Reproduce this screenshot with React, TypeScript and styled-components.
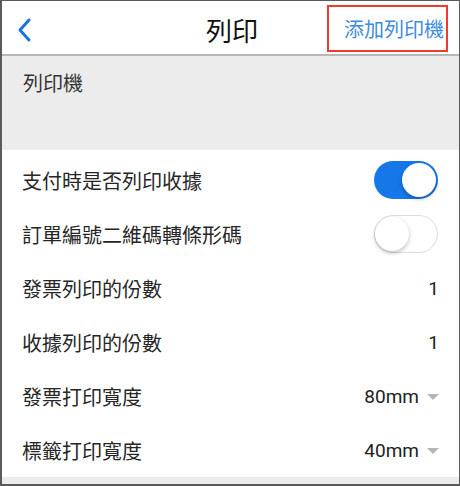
import { useState } from "react"
import styled, { createGlobalStyle } from "styled-components"

const GlobalStyle = createGlobalStyle`
  html, body {
    margin: 0;
    padding: 0;
    background: #ffffff;
  }
  body {
    font-family: Roboto, "Noto Sans CJK TC", "Noto Sans CJK SC", sans-serif;
  }
`

type Row =
  | { kind: "switch"; label: string; on: boolean }
  | { kind: "value"; label: string; value: string }
  | { kind: "select"; label: string; value: string }

const rows: Row[] = [
  { kind: "switch", label: "支付時是否列印收據", on: true },
  { kind: "switch", label: "訂單編號二維碼轉條形碼", on: false },
  { kind: "value", label: "發票列印的份數", value: "1" },
  { kind: "value", label: "收據列印的份數", value: "1" },
  { kind: "select", label: "發票打印寬度", value: "80mm" },
  { kind: "select", label: "標籤打印寬度", value: "40mm" },
]

export default function App() {
  const [switches, setSwitches] = useState<boolean[]>(rows.map(r => (r.kind === "switch" ? r.on : false)))

  return (
    <>
      <GlobalStyle />
      <Frame>
        <Header>
          <BackButton aria-label="back">
            <svg width="18" height="26" viewBox="0 0 18 26">
              <path d="M13 3 L4 13 L13 23" fill="none" stroke="#1a73e0" strokeWidth="3" strokeLinecap="round" strokeLinejoin="round" />
            </svg>
          </BackButton>
          <Title>列印</Title>
          <AddButton>添加列印機</AddButton>
        </Header>

        <Section>
          <SectionTitle>列印機</SectionTitle>
        </Section>

        <List>
          {rows.map((row, i) => (
            <Item key={row.label}>
              <Label>{row.label}</Label>
              {row.kind === "switch" && (
                <Toggle
                  $on={switches[i]}
                  onClick={() => setSwitches(s => s.map((v, j) => (j === i ? !v : v)))}
                >
                  <Knob $on={switches[i]} />
                </Toggle>
              )}
              {row.kind === "value" && <Value>{row.value}</Value>}
              {row.kind === "select" && (
                <Select>
                  <Value>{row.value}</Value>
                  <Caret />
                </Select>
              )}
            </Item>
          ))}
        </List>
        <Footer />
      </Frame>
    </>
  )
}

const Frame = styled.div`
  box-sizing: border-box;
  width: 460px;
  height: 486px;
  border: 1px solid #5a5a5a;
  border-left-width: 2px;
  border-bottom-width: 2px;
  display: flex;
  flex-direction: column;
  overflow: hidden;
  background: #ffffff;
`

const Header = styled.div`
  height: 53px;
  flex-shrink: 0;
  display: grid;
  grid-template-columns: 1fr auto 1fr;
  align-items: center;
  border-bottom: 2px solid #b8b8b8;
  padding: 0 11px 0 14px;
`

const BackButton = styled.button`
  justify-self: start;
  border: none;
  background: none;
  padding: 0;
  display: flex;
  align-items: center;
  margin-top: 4px;
`

const Title = styled.div`
  font-size: 26px;
  color: #111111;
  font-family: "Noto Sans CJK TC", sans-serif;
  margin-top: 3px;
`

const AddButton = styled.button`
  justify-self: end;
  box-sizing: border-box;
  height: 47px;
  margin-top: 1px;
  padding: 0 2px 0 15px;
  border: 2px solid #ef3b2c;
  background: #ffffff;
  color: #3b8be0;
  font-size: 20px;
  font-family: "Noto Sans CJK TC", sans-serif;
  display: flex;
  align-items: center;
`

const Section = styled.div`
  height: 94px;
  flex-shrink: 0;
  background: #ececec;
  padding: 12px 21px 0;
  box-sizing: border-box;
`

const SectionTitle = styled.div`
  font-size: 20px;
  color: #333333;
  font-family: "Noto Sans CJK TC", sans-serif;
`

const List = styled.div`
  padding-top: 3px;
  display: flex;
  flex-direction: column;
`

const Item = styled.div`
  height: 54px;
  display: flex;
  align-items: center;
  justify-content: space-between;
  padding: 0 20px 0 20px;
`

const Label = styled.div`
  font-size: 20px;
  color: #262626;
  font-family: "Noto Sans CJK TC", sans-serif;
`

const Value = styled.div`
  font-size: 19px;
  color: #222222;
  font-family: Roboto, sans-serif;
`

const Select = styled.div`
  display: flex;
  align-items: center;
  gap: 8px;
`

const Caret = styled.span`
  width: 0;
  height: 0;
  border-left: 6px solid transparent;
  border-right: 6px solid transparent;
  border-top: 6px solid #b5b5b5;
  margin-top: 1px;
`

const Toggle = styled.button<{ $on: boolean }>`
  position: relative;
  width: 64px;
  height: 38px;
  border-radius: 19px;
  padding: 0;
  box-sizing: border-box;
  border: ${p => (p.$on ? "none" : "1px solid #dddddd")};
  background: ${p => (p.$on ? "#1677e8" : "#ffffff")};
  cursor: pointer;
  margin-right: 1px;
`

const Knob = styled.span<{ $on: boolean }>`
  position: absolute;
  top: ${p => (p.$on ? "2px" : "1px")};
  left: ${p => (p.$on ? "28px" : "0px")};
  width: 34px;
  height: 34px;
  border-radius: 50%;
  background: #ffffff;
  box-shadow: 0 2px 4px rgba(0, 0, 0, 0.25);
`

const Footer = styled.div`
  flex: 1;
  background: #ececec;
`
